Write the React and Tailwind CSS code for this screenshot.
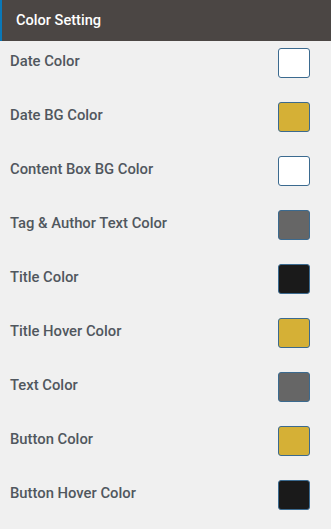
const ROWS = [
  { label: "Date Color", color: "bg-white" },
  { label: "Date BG Color", color: "bg-[#d5b036]" },
  { label: "Content Box BG Color", color: "bg-white" },
  { label: "Tag & Author Text Color", color: "bg-[#666666]" },
  { label: "Title Color", color: "bg-[#1a1a1a]" },
  { label: "Title Hover Color", color: "bg-[#d5b036]" },
  { label: "Text Color", color: "bg-[#666666]" },
  { label: "Button Color", color: "bg-[#d5b036]" },
  { label: "Button Hover Color", color: "bg-[#1a1a1a]" },
];

export default function App() {
  return (
    <div
      className="w-[331px] h-[529px] bg-[#f0f0f0] overflow-hidden"
      style={{ fontFamily: "Roboto, 'Liberation Sans', sans-serif" }}
    >
      <div className="h-[41px] bg-[#4b4644] border-l-2 border-[#0a78b8] flex items-center pl-[14px]">
        <span className="text-white text-[14.6px] font-medium">Color Setting</span>
      </div>
      <ul>
        {ROWS.map((row) => (
          <li key={row.label} className="h-[54px] flex items-start pt-[7px] pl-[10px] pr-[21px]">
            <div className="flex-1 h-[30px] flex items-center -mt-[2px] text-[14.8px] font-medium text-[#50575e]">
              {row.label}
            </div>
            <div
              className={`w-[32px] h-[30px] rounded-[3px] border border-[#3b6a8f] ${row.color}`}
            />
          </li>
        ))}
      </ul>
    </div>
  );
}
